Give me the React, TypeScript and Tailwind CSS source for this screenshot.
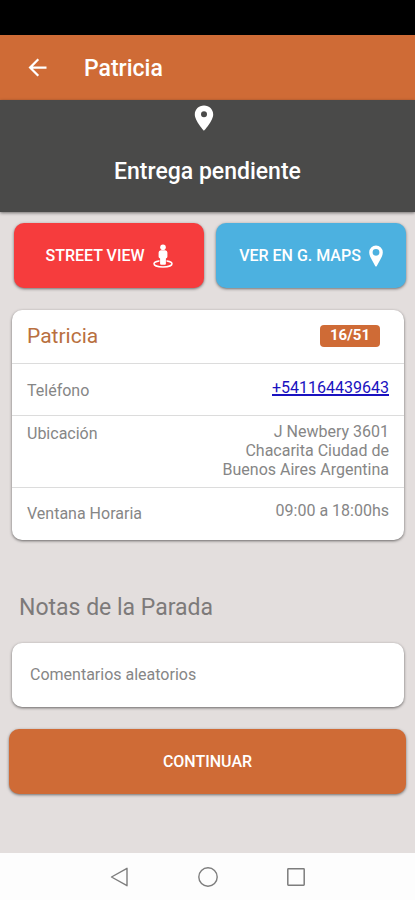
import React from "react";
import { MdArrowBack } from "react-icons/md";

interface DetailRowProps {
  label: string;
  className: string;
  children: React.ReactNode;
}

const DetailRow: React.FC<DetailRowProps> = ({
  label,
  className,
  children,
}) => (
  <div
    className={`flex justify-between border-t border-[#dcdcdc] px-[15px] ${className}`}
  >
    <dt className="pt-[2px]">{label}</dt>
    <dd className="w-44 pb-1 text-right">{children}</dd>
  </div>
);

const StopPin: React.FC = () => (
  <svg viewBox="0 0 20 26" className="mr-[7px] h-[26px] w-5" fill="currentColor">
    <path
      fillRule="evenodd"
      d="M10 .5C4.7.5.8 4.500.8 9.400.8 15.700 10 25.700 10 25.700S19.200 15.700 19.200 9.400C19.200 4.500 15.300.5 10 .5zM10 6.300a3 3 0 1 1 0 6 3 3 0 0 1 0-6z"
    />
  </svg>
);

const MapPin: React.FC = () => (
  <svg viewBox="0 0 14 22" className="h-[22px] w-[14px]" fill="currentColor">
    <path
      fillRule="evenodd"
      d="M7 .5A6.800 6.800 0 0 0 .2 7.300C.2 9.500 1 11.300 2 13.200L6.200 21Q7 22.200 7.800 21L12 13.200C13 11.300 13.800 9.500 13.800 7.300A6.800 6.800 0 0 0 7 .5zM7 3.900a3.400 3.400 0 1 1 0 6.800 3.400 3.400 0 0 1 0-6.800z"
    />
  </svg>
);

const StreetViewIcon: React.FC = () => (
  <svg viewBox="0 0 20 24" className="h-6 w-5" fill="currentColor">
    <circle cx="10" cy="3.2" r="2.8" />
    <path d="M7.800 6.300h4.400q2.200.2 2.200 2.200v4.300q0 1.400-1.500 1.600v5.300q0 1-1 1H8.100q-1 0-1-1v-5.300q-1.500-.2-1.500-1.600V8.500q0-2 2.200-2.200z" />
    <path
      d="M6 16.900C3 17.400 1 18.400 1 19.700c0 1.900 4 3.300 9 3.300s9-1.400 9-3.300c0-1.300-2-2.300-5-2.800"
      fill="none"
      stroke="currentColor"
      strokeWidth="1.5"
      strokeLinecap="round"
    />
  </svg>
);

const Header: React.FC = () => (
  <header>
    <div className="h-[35px] bg-black" />
    <div className="flex h-[65px] items-center bg-[#cf6b36] px-6 text-white">
      <button type="button" aria-label="Volver">
        <MdArrowBack className="size-[27px]" />
      </button>
      <h1 className="ml-[33px] pt-[3px] text-[23px] leading-7 font-medium">
        Patricia
      </h1>
    </div>
    <div className="flex h-28 flex-col items-center bg-[#4a4a49] pt-[5px] text-white shadow-[0_1px_3px_rgba(0,0,0,0.5)]">
      <StopPin />
      <h2 className="mt-[27px] text-[23px] leading-7 font-medium">
        Entrega pendiente
      </h2>
    </div>
  </header>
);

const StopCard: React.FC = () => (
  <section className="mt-[22px] mr-[11px] ml-3 rounded-[10px] bg-white shadow-[0_1px_3px_rgba(0,0,0,0.55)]">
    <div className="flex h-[53px] items-center justify-between pr-6 pb-[2px] pl-[15px]">
      <h3 className="text-[21px] leading-7 text-[#b9703f]">Patricia</h3>
      <span className="flex h-[22px] items-center rounded bg-[#cf6b36] px-[10px] text-[15px] font-bold text-white">
        16/51
      </span>
    </div>
    <dl className="text-base leading-[19px] text-[#868686]">
      <DetailRow label="Teléfono" className="h-[52px] items-center">
        <a
          href="tel:+541164439643"
          className="text-[#1a12c0] underline decoration-2"
        >
          +541164439643
        </a>
      </DetailRow>
      <DetailRow label="Ubicación" className="h-[72px] items-start pt-[6px]">
        J Newbery 3601 Chacarita Ciudad de Buenos Aires Argentina
      </DetailRow>
      <DetailRow
        label="Ventana Horaria"
        className="h-[53px] items-center pb-[3px]"
      >
        09:00 a 18:00hs
      </DetailRow>
    </dl>
  </section>
);

const NavigationBar: React.FC = () => (
  <nav className="mt-auto flex h-[47px] items-center justify-center gap-[66px] bg-[#fdfdfd] text-[#7d7d7d]">
    <button type="button" aria-label="Atrás">
      <svg viewBox="0 0 22 22" className="size-[22px]" fill="none" stroke="currentColor" strokeWidth="1.4" strokeLinejoin="round">
        <path d="M18 2.300v17.400L2.500 11z" />
      </svg>
    </button>
    <button type="button" aria-label="Inicio">
      <svg viewBox="0 0 22 22" className="size-[22px]" fill="none" stroke="currentColor" strokeWidth="1.4">
        <circle cx="11" cy="11" r="9.2" />
      </svg>
    </button>
    <button type="button" aria-label="Recientes">
      <svg viewBox="0 0 22 22" className="size-[22px]" fill="none" stroke="currentColor" strokeWidth="1.5" strokeLinejoin="round">
        <rect x="2.8" y="2.8" width="16.4" height="16.4" rx="0.6" />
      </svg>
    </button>
  </nav>
);

const App: React.FC = () => {
  return (
    <div className="flex min-h-screen flex-col bg-[#e3dedd] font-['Roboto',sans-serif]">
      <Header />
      <main>
        <div className="mt-[11px] mr-[9px] ml-[14px] grid grid-cols-2 gap-3 text-base font-medium text-white">
          <button
            type="button"
            className="flex h-[65px] items-center justify-center gap-2 rounded-[10px] bg-[#f63c3d] shadow-[0_1px_3px_rgba(0,0,0,0.5)]"
          >
            STREET VIEW
            <StreetViewIcon />
          </button>
          <button
            type="button"
            className="flex h-[65px] items-center justify-center gap-2 rounded-[10px] bg-[#4cb1e0] shadow-[0_1px_3px_rgba(0,0,0,0.5)]"
          >
            VER EN G. MAPS
            <MapPin />
          </button>
        </div>
        <StopCard />
        <h2 className="mt-[54px] ml-[19px] text-[23px] leading-7 text-[#7d7a7a]">
          Notas de la Parada
        </h2>
        <p className="mt-[21px] mr-[11px] ml-3 flex h-16 items-center rounded-[10px] bg-white px-[18px] text-base text-[#868686] shadow-[0_1px_3px_rgba(0,0,0,0.55)]">
          Comentarios aleatorios
        </p>
        <div className="mt-[22px] px-[9px]">
          <button
            type="button"
            className="h-[65px] w-full rounded-[10px] bg-[#cf6b36] text-base font-medium text-white shadow-[0_1px_3px_rgba(0,0,0,0.5)]"
          >
            CONTINUAR
          </button>
        </div>
      </main>
      <NavigationBar />
    </div>
  );
};

export default App;
